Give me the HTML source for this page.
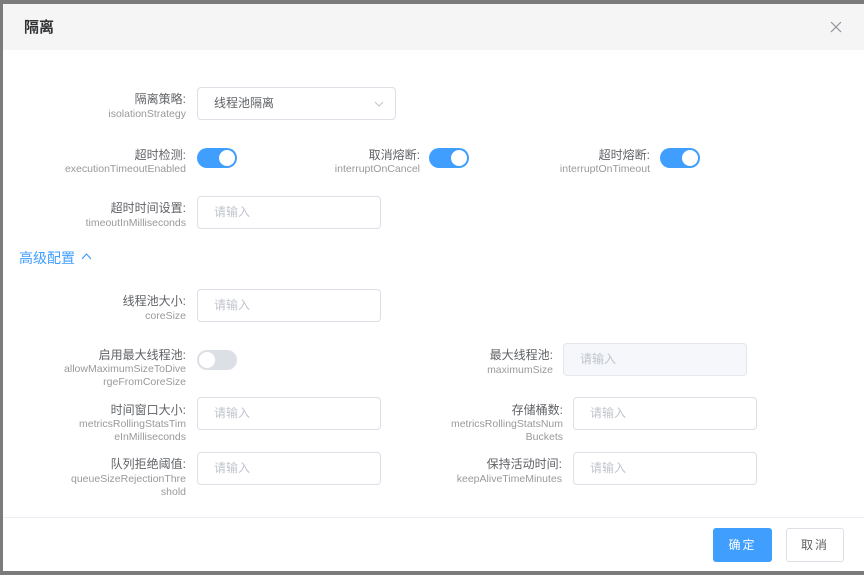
<!DOCTYPE html>
<html><head><meta charset="utf-8"><style>
*{margin:0;padding:0;box-sizing:border-box}
body{width:864px;height:575px;background:#7b7b7b;position:relative;overflow:hidden;font-family:"Liberation Sans","Noto Sans CJK SC",sans-serif}
.dlg{position:absolute;left:3px;top:4px;width:861px;height:567px;background:#fff}
.hd{position:absolute;left:0;top:0;width:100%;height:46px;background:#f5f5f5}
.t{position:absolute;left:21px;top:12px;font-size:15px;font-weight:bold;color:#303133}
.a{position:absolute}
.cn{position:absolute;font-size:12px;color:#606266;white-space:nowrap;text-align:right;line-height:14px}
.en{position:absolute;font-size:10.5px;color:#999;text-align:right;line-height:13px;white-space:nowrap}
.in{position:absolute;height:33px;border:1px solid #dcdfe6;border-radius:4px;font-size:12px;color:#c0c4cc;padding-left:16px;line-height:31px;background:#fff}
.sw{position:absolute;width:40px;height:20px;border-radius:10px;background:#409eff}
.sw:after{content:"";position:absolute;right:2px;top:2px;width:16px;height:16px;border-radius:50%;background:#fff}
.sw.off{background:#dcdfe6}.sw.off:after{right:auto;left:2px}
</style></head><body>
<div class="dlg">
<div class="hd"><div class="t">隔离</div>
<svg class="a" style="left:827px;top:17px" width="12" height="12" viewBox="0 0 12 12"><path d="M1 1L11 11M11 1L1 11" stroke="#909399" stroke-width="1.2"/></svg></div>
</div>
<div class="cn" style="right:678px;top:92px">隔离策略:</div>
<div class="en" style="right:678px;top:108px">isolationStrategy</div>
<div class="in" style="left:197px;top:87px;width:199px;color:#606266">线程池隔离
<svg class="a" style="left:176px;top:13px" width="10" height="7" viewBox="0 0 10 7"><path d="M1 1L5 5L9 1" stroke="#c0c4cc" fill="none"/></svg></div>
<div class="cn" style="right:678px;top:148px">超时检测:</div>
<div class="en" style="right:678px;top:163px">executionTimeoutEnabled</div>
<div class="sw" style="left:197px;top:148px"></div>
<div class="cn" style="right:444px;top:148px">取消熔断:</div>
<div class="en" style="right:444px;top:163px">interruptOnCancel</div>
<div class="sw" style="left:429px;top:148px"></div>
<div class="cn" style="right:214px;top:148px">超时熔断:</div>
<div class="en" style="right:214px;top:163px">interruptOnTimeout</div>
<div class="sw" style="left:660px;top:148px"></div>
<div class="cn" style="right:678px;top:201px">超时时间设置:</div>
<div class="en" style="right:678px;top:217px">timeoutInMilliseconds</div>
<div class="in" style="left:197px;top:196px;width:184px">请输入</div>
<div class="a" style="left:19px;top:248px;font-size:14px;color:#409eff">高级配置</div>
<svg class="a" style="left:81px;top:252px" width="11" height="8" viewBox="0 0 11 8"><path d="M1 7L5.5 2L10 7" stroke="#409eff" fill="none" stroke-width="1.2"/></svg>
<div class="cn" style="right:678px;top:294px">线程池大小:</div>
<div class="en" style="right:678px;top:310px">coreSize</div>
<div class="in" style="left:197px;top:289px;width:184px">请输入</div>
<div class="cn" style="right:678px;top:348px">启用最大线程池:</div>
<div class="en" style="right:678px;top:363px">allowMaximumSizeToDive<br>rgeFromCoreSize</div>
<div class="sw off" style="left:197px;top:350px"></div>
<div class="cn" style="right:311px;top:348px">最大线程池:</div>
<div class="en" style="right:311px;top:364px">maximumSize</div>
<div class="in" style="left:563px;top:343px;width:184px;background:#f5f7fa;border-color:#e4e7ed">请输入</div>
<div class="cn" style="right:678px;top:403px">时间窗口大小:</div>
<div class="en" style="right:678px;top:418px">metricsRollingStatsTim<br>eInMilliseconds</div>
<div class="in" style="left:197px;top:397px;width:184px">请输入</div>
<div class="cn" style="right:301px;top:403px">存储桶数:</div>
<div class="en" style="right:301px;top:418px">metricsRollingStatsNum<br>Buckets</div>
<div class="in" style="left:573px;top:397px;width:184px">请输入</div>
<div class="cn" style="right:678px;top:457px">队列拒绝阈值:</div>
<div class="en" style="right:678px;top:473px">queueSizeRejectionThre<br>shold</div>
<div class="in" style="left:197px;top:452px;width:184px">请输入</div>
<div class="cn" style="right:302px;top:457px">保持活动时间:</div>
<div class="en" style="right:302px;top:473px">keepAliveTimeMinutes</div>
<div class="in" style="left:573px;top:452px;width:184px">请输入</div>
<div class="a" style="left:3px;top:517px;width:861px;height:1px;background:#ebeef5"></div>
<div class="a" style="left:713px;top:528px;width:59px;height:34px;background:#409eff;border-radius:3px;color:#fff;font-size:12px;text-align:center;line-height:34px;letter-spacing:2px">确定</div>
<div class="a" style="left:786px;top:528px;width:58px;height:34px;border:1px solid #dcdfe6;border-radius:3px;color:#606266;font-size:12px;text-align:center;line-height:32px;letter-spacing:2px">取消</div>
</body></html>
